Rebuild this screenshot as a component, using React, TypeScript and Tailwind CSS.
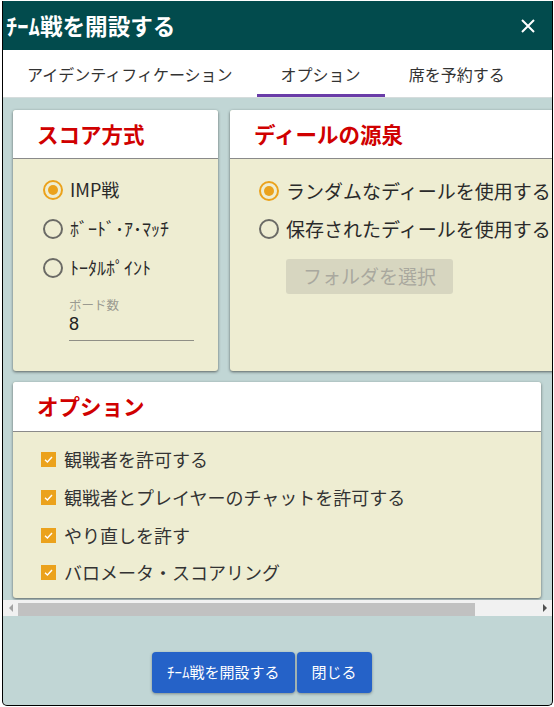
import React from "react";

const font = { fontFamily: '"Noto Sans CJK JP", "Noto Sans", sans-serif' };

function Radio({ checked, label, big }: { checked?: boolean; label: string; big?: boolean }) {
  return (
    <div className={`flex items-center ${big ? "h-[38px]" : "h-[39px]"}`}>
      <div
        className={`w-[20px] h-[20px] rounded-full border-2 flex items-center justify-center shrink-0 ${
          checked ? "border-[#eba21c]" : "border-[#6b6b66]"
        }`}
      >
        {checked && <div className="w-[10px] h-[10px] rounded-full bg-[#eba21c]" />}
      </div>
      <span className={`ml-[7px] whitespace-nowrap text-[#2a2a2a] ${big ? "text-[19px]" : "text-[18px]"}`}>{label}</span>
    </div>
  );
}

function Check({ label }: { label: string }) {
  return (
    <div className="flex items-center h-[37.7px]">
      <div className="w-[15px] h-[15px] bg-[#eba21c] flex items-center justify-center shrink-0">
        <svg width="11" height="11" viewBox="0 0 11 11">
          <path d="M2 5.8 L4.4 8 L9 3" stroke="white" strokeWidth="1.4" fill="none" />
        </svg>
      </div>
      <span className="ml-[8px] text-[18px] text-[#333] whitespace-nowrap">{label}</span>
    </div>
  );
}

function Card({ title, className, children, headH }: { title: string; className: string; children: React.ReactNode; headH: string }) {
  return (
    <div className={`rounded-[3px] overflow-hidden shadow-[0_1px_3px_rgba(0,0,0,0.55)] flex flex-col bg-[#eeedd2] ${className}`}>
      <div className={`bg-white border-b border-[#8a8a8a] flex items-center pl-[24px] ${headH}`}>
        <span className="text-[21.5px] font-bold text-[#d00000] whitespace-nowrap">{title}</span>
      </div>
      <div className="flex-1">{children}</div>
    </div>
  );
}

export default function App() {
  return (
    <div className="w-[554px] h-[707px] bg-white overflow-hidden pt-[1px] pl-[2px]" style={font}>
      <div className="w-[551px] h-[705px] border-x border-b border-black rounded-b-[5px] flex flex-col overflow-hidden bg-[#c1d6d5]">
        {/* title */}
        <div className="h-[49px] bg-[#024b4d] flex items-center justify-between pl-[3px] pr-[16px] shrink-0">
          <span className="text-white text-[22.6px] font-bold whitespace-nowrap">ﾁｰﾑ戦を開設する</span>
          <svg width="16" height="16" viewBox="0 0 16 16">
            <path d="M2 2 L14 14 M14 2 L2 14" stroke="white" strokeWidth="2" />
          </svg>
        </div>
        {/* tabs */}
        <div className="h-[48px] bg-white flex border-b border-[#d5dcdc] shrink-0">
          <div className="px-[24px] flex items-center text-[16px] text-[#333] whitespace-nowrap">アイデンティフィケーション</div>
          <div className="px-[24px] flex items-center text-[16px] text-[#333] whitespace-nowrap border-b-[3px] border-[#6a3ca8] pt-[3px]">オプション</div>
          <div className="px-[24px] flex items-center text-[16px] text-[#333] whitespace-nowrap">席を予約する</div>
        </div>
        {/* scroll viewport */}
        <div className="overflow-hidden shrink-0">
          <div className="w-[640px] pl-[10px] pt-[12px] pb-[2px] flex flex-col gap-[11px]">
            <div className="flex gap-[12px] h-[261px]">
              <Card title="スコア方式" className="w-[205px]" headH="h-[49px]">
                <div className="pl-[30px] pt-[11px]">
                  <Radio checked label="IMP戦" />
                  <Radio label="ﾎﾞｰﾄﾞ･ｱ･ﾏｯﾁ" />
                  <Radio label="ﾄｰﾀﾙﾎﾟｲﾝﾄ" />
                  <div className="ml-[26px] mt-[9px] w-[125px] border-b border-[#8f8f86] flex flex-col pb-[5px]">
                    <span className="text-[12.5px] leading-[18px] text-[#9a9a90]">ボード数</span>
                    <span className="text-[18px] leading-[21px] text-[#222]" style={{ fontFamily: '"Liberation Sans", sans-serif' }}>8</span>
                  </div>
                </div>
              </Card>
              <Card title="ディールの源泉" className="w-[390px]" headH="h-[49px]">
                <div className="pl-[29px] pt-[13px]">
                  <Radio checked big label="ランダムなディールを使用する" />
                  <Radio big label="保存されたディールを使用する" />
                  <div className="ml-[27px] mt-[11px] w-[167px] h-[35px] rounded-[3px] bg-[#d7d6c0] flex items-center justify-center text-[19px] text-[#a9a89e]">
                    フォルダを選択
                  </div>
                </div>
              </Card>
            </div>
            <Card title="オプション" className="w-[528px] h-[216px]" headH="h-[50px]">
              <div className="pl-[28px] pt-[9px]">
                <Check label="観戦者を許可する" />
                <Check label="観戦者とプレイヤーのチャットを許可する" />
                <Check label="やり直しを許す" />
                <Check label="バロメータ・スコアリング" />
              </div>
            </Card>
          </div>
        </div>
        {/* scrollbar */}
        <div className="h-[16px] bg-[#f1f1f1] flex items-center shrink-0">
          <div className="w-[15px] flex items-center justify-center">
            <svg width="6" height="8" viewBox="0 0 6 8"><path d="M5 0 L1 4 L5 8 Z" fill="#a3a3a3" /></svg>
          </div>
          <div className="w-[457px] h-[13px] mt-[2px] bg-[#c1c1c1]" />
          <div className="flex-1" />
          <div className="w-[15px] flex items-center justify-center">
            <svg width="6" height="8" viewBox="0 0 6 8"><path d="M1 0 L5 4 L1 8 Z" fill="#505050" /></svg>
          </div>
        </div>
        {/* footer */}
        <div className="flex-1 flex items-start pl-[149px] pt-[36px] gap-[2px]">
          <div className="h-[41px] px-[15px] rounded-[4px] bg-[#2562c8] shadow-[0_1px_3px_rgba(0,0,0,0.35)] flex items-center text-white text-[15px] whitespace-nowrap">
            ﾁｰﾑ戦を開設する
          </div>
          <div className="h-[41px] px-[15px] rounded-[4px] bg-[#2562c8] shadow-[0_1px_3px_rgba(0,0,0,0.35)] flex items-center text-white text-[15px] whitespace-nowrap">
            閉じる
          </div>
        </div>
      </div>
    </div>
  );
}
